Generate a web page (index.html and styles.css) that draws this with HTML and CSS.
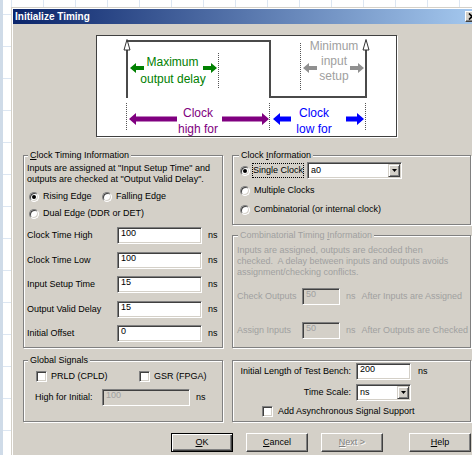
FILE: index.html
```html
<!DOCTYPE html>
<html lang="en">
<head>
<meta charset="utf-8">
<title>Initialize Timing</title>
<link rel="stylesheet" href="styles.css">
</head>
<body>
<div class="window">
  <div class="titlebar">
    <span class="title">Initialize Timing</span>
    <span class="close-btn"><svg width="8" height="7" viewBox="0 0 8 7"><path d="M1 0.5l6 6M7 0.5l-6 6" stroke="#000" stroke-width="1.6"/></svg></span>
  </div>
  <div class="dialog">
    <div class="diagram">
      <svg width="299" height="100" viewBox="0 0 299 100" font-family="Liberation Sans, Arial, sans-serif" font-size="12" text-anchor="middle">
        <!-- clock waveform -->
        <path d="M30 5H173V61H269V14M30 14V62" fill="none" stroke="#4a4a4a" stroke-width="2"/>
        <path d="M30 3.5L27 14H33Z M269 3.5L266 14H272Z" fill="#fff" stroke="#333" stroke-width="1"/>
        <!-- marker lines -->
        <path d="M121.5 17V53M203.5 7V54M29.5 67V95M172.5 67V95M268.5 67V95" stroke="#555" stroke-width="1" stroke-dasharray="1 1"/>
        <!-- output delay -->
        <g fill="#008000">
          <polygon points="47,30 39,30 39,27 33,32 39,37 39,34 47,34"/>
          <polygon points="106,30 114,30 114,27 120,32 114,37 114,34 106,34"/>
          <text x="75.5" y="30">Maximum</text>
          <text x="76" y="47">output delay</text>
        </g>
        <!-- input setup -->
        <g fill="#a0a0a0">
          <polygon points="220,30 212,30 212,27 206,32 212,37 212,34 220,34" fill="#909090"/>
          <polygon points="253,30 261,30 261,27 267,32 261,37 261,34 253,34" fill="#909090"/>
          <text x="237" y="14">Minimum</text>
          <text x="237" y="28.5">input</text>
          <text x="237" y="44">setup</text>
        </g>
        <!-- clock high -->
        <g fill="#800080">
          <polygon points="80,80.5 39,80.5 39,77 32,83 39,89 39,85.5 80,85.5"/>
          <polygon points="125,80.5 165,80.5 165,77 172,83 165,89 165,85.5 125,85.5"/>
          <text x="101" y="80.5">Clock</text>
          <text x="101" y="96.5">high for</text>
        </g>
        <!-- clock low -->
        <g fill="#0000ff">
          <polygon points="194,80.5 183,80.5 183,77 176,83 183,89 183,85.5 194,85.5"/>
          <polygon points="249,80.5 260,80.5 260,77 267,83 260,89 260,85.5 249,85.5"/>
          <text x="217" y="80.5">Clock</text>
          <text x="217" y="96.5">low for</text>
        </g>
      </svg>
    </div>

    <div class="main">
      <fieldset class="group timing">
        <legend><u>C</u>lock Timing Information</legend>
        <p class="note">Inputs are assigned at "Input Setup Time" and<br>outputs are checked at "Output Valid Delay".</p>
        <div class="edge-row">
          <span class="opt rising"><span class="radio on"></span>Rising Edge</span>
          <span class="opt"><span class="radio"></span>Falling Edge</span>
        </div>
        <div class="opt dual"><span class="radio"></span>Dual Edge (DDR or DET)</div>
        <div class="fields">
          <span>Clock Time High</span><span class="edit">100</span><span>ns</span>
          <span>Clock Time Low</span><span class="edit">100</span><span>ns</span>
          <span>Input Setup Time</span><span class="edit">15</span><span>ns</span>
          <span>Output Valid Delay</span><span class="edit">15</span><span>ns</span>
          <span>Initial Offset</span><span class="edit">0</span><span>ns</span>
        </div>
      </fieldset>

      <div class="right-col">
        <fieldset class="group clock-info">
          <legend>Clock <u>I</u>nformation</legend>
          <div class="opt single">
            <span class="radio on"></span><span class="focus">Single Clock</span>
            <span class="combo clock-sel"><span>a0</span><span class="drop"><svg width="5" height="3" viewBox="0 0 5 3"><path d="M0 0h5L2.5 3z"/></svg></span></span>
          </div>
          <div class="opt multi"><span class="radio"></span>Multiple Clocks</div>
          <div class="opt comb-opt"><span class="radio"></span>Combinatorial (or internal clock)</div>
        </fieldset>

        <fieldset class="group comb">
          <legend>Combinatorial Timing <u>I</u>nformation</legend>
          <p class="note">Inputs are assigned, outputs are decoded then<br>checked.&nbsp; A delay between inputs and outputs avoids<br>assignment/checking conflicts.</p>
          <div class="comb-fields">
            <span>Check Outputs</span><span class="edit off">50</span><span>ns</span><span>After Inputs are Assigned</span>
            <span>Assign Inputs</span><span class="edit off">50</span><span>ns</span><span>After Outputs are Checked</span>
          </div>
        </fieldset>
      </div>

      <fieldset class="group global">
        <legend>Global Signals</legend>
        <div class="checks">
          <span class="opt prld"><span class="check"></span>PRLD (CPLD)</span>
          <span class="opt"><span class="check"></span>GSR (FPGA)</span>
        </div>
        <div class="high-row">
          <span>High for Initial:</span><span class="edit off">100</span><span>ns</span>
        </div>
      </fieldset>

      <fieldset class="group bench">
        <div class="bench-grid">
          <span class="lbl">Initial Length of Test Bench:</span><span class="edit">200</span><span>ns</span>
          <span class="lbl">Time Scale:</span><span class="combo"><span>ns</span><span class="drop"><svg width="5" height="3" viewBox="0 0 5 3"><path d="M0 0h5L2.5 3z"/></svg></span></span><span></span>
          <span class="opt async"><span class="check"></span>Add Asynchronous Signal Support</span>
        </div>
      </fieldset>
    </div>

    <div class="buttons">
      <span class="btn default"><span><u>O</u>K</span></span>
      <span class="btn"><span><u>C</u>ancel</span></span>
      <span class="btn off"><span><u>N</u>ext &gt;</span></span>
      <span class="btn help"><span><u>H</u>elp</span></span>
    </div>
  </div>
</div>
</body>
</html>
```

FILE: styles.css
```css
* { box-sizing: border-box; }

html, body { margin: 0; padding: 0; }

/* desktop behind the dialog: pale grid with a narrow strip on the left */
body {
  width: 472px;
  height: 455px;
  overflow: hidden;
  position: relative;
  background-color: #fff;
  background-image:
    linear-gradient(90deg, #cfdbe8 0 3px, transparent 3px),
    linear-gradient(90deg, #dce6f2 1px, transparent 1px),
    linear-gradient(180deg, #dce6f2 1px, transparent 1px);
  background-size: 100% 100%, 32px 32px, 32px 32px;
  background-position: 0 0, 11px 14px, 11px 14px;
  background-repeat: no-repeat, repeat, repeat;
  font-family: "Liberation Sans", Arial, sans-serif;
}

/* dialog window */
.window {
  position: absolute;
  left: 11px;
  top: 7px;
  width: 472px;
  height: 460px;
  border: 1px solid #d4d0c8;
  padding: 1px;
  background: #d4d0c8;
  box-shadow: inset 1px 1px 0 #fff;
  font-size: 9px;
  line-height: 11px;
  color: #000;
}

.titlebar {
  height: 15px;
  display: flex;
  align-items: center;
  justify-content: space-between;
  padding: 0 2px;
  background: linear-gradient(90deg, #0a246a, #a6caf0);
}

.title {
  color: #fff;
  font-weight: bold;
  font-size: 10px;
  line-height: 13px;
}

.close-btn {
  width: 14px;
  height: 11px;
  display: flex;
  align-items: center;
  justify-content: center;
  background: #d4d0c8;
  border: 1px solid;
  border-color: #fff #404040 #404040 #fff;
  box-shadow: inset -1px -1px 0 #808080;
}

.dialog { padding: 11px 10px 0; }

/* timing diagram */
.diagram {
  width: 301px;
  height: 102px;
  margin-left: 73px;
  border: 1px solid #404040;
  background: #fff;
  box-shadow: 1px 1px 0 #fff;
}
.diagram svg { display: block; }

/* group boxes */
.main {
  display: grid;
  grid-template-columns: 200px 239px;
  column-gap: 9px;
  row-gap: 7px;
  margin-top: 13px;
}

.group {
  margin: 0;
  min-width: 0;
  border: 1px solid #808080;
  box-shadow: 1px 1px 0 #fff, inset 1px 1px 0 #fff;
}

.group legend {
  padding: 0 2px;
  line-height: 11px;
  background: #d4d0c8;
}

.note { margin: 0; white-space: nowrap; }

/* controls */
.opt {
  display: flex;
  align-items: center;
  height: 13px;
  white-space: nowrap;
}

.radio {
  flex: none;
  position: relative;
  width: 10px;
  height: 10px;
  margin-right: 4px;
  border-radius: 50%;
  background: #fff;
  border: 1px solid;
  border-color: #808080 #fff #fff #808080;
  box-shadow: inset 1px 1px 0 #404040, inset -1px -1px 0 #d4d0c8;
}
.radio.on::after {
  content: "";
  position: absolute;
  left: 2px;
  top: 2px;
  width: 4px;
  height: 4px;
  border-radius: 50%;
  background: #000;
}

.check {
  flex: none;
  width: 11px;
  height: 11px;
  margin-right: 4px;
  background: #fff;
  border: 1px solid;
  border-color: #808080 #fff #fff #808080;
  box-shadow: inset 1px 1px 0 #404040, inset -1px -1px 0 #d4d0c8;
}

.edit {
  height: 17px;
  padding: 0 3px;
  line-height: 11px;
  background: #fff;
  border: 1px solid;
  border-color: #808080 #fff #fff #808080;
  box-shadow: inset 1px 1px 0 #404040, inset -1px -1px 0 #d4d0c8;
  white-space: nowrap;
}
.edit.off { background: #d4d0c8; color: #a0a0a0; }

.combo {
  height: 17px;
  display: flex;
  align-items: center;
  justify-content: space-between;
  padding: 1px 1px 1px 3px;
  background: #fff;
  border: 1px solid;
  border-color: #808080 #fff #fff #808080;
  box-shadow: inset 1px 1px 0 #404040, inset -1px -1px 0 #d4d0c8;
}

.drop {
  width: 12px;
  height: 13px;
  display: flex;
  align-items: center;
  justify-content: center;
  background: #d4d0c8;
  border: 1px solid;
  border-color: #d4d0c8 #404040 #404040 #d4d0c8;
  box-shadow: inset 1px 1px 0 #fff, inset -1px -1px 0 #808080;
}
.drop svg { display: block; }

/* Clock Timing Information */
.timing { padding: 0 5px 5px 3px; }
.timing legend { margin-left: 1px; }
.timing .note { margin-top: 2px; }
.edge-row { display: flex; margin: 5px 0 0 2px; }
.edge-row .rising { width: 73px; }
.dual { margin: 4px 0 0 2px; }
.fields {
  display: grid;
  grid-template-columns: 84px 85px auto;
  column-gap: 6px;
  row-gap: 7.5px;
  align-items: center;
  margin-top: 7px;
}

/* right column */
.right-col {
  display: flex;
  flex-direction: column;
  gap: 5px;
}

.clock-info { padding: 1px 4px 8px 6px; }
.clock-info .opt { margin-left: 1px; }
.single { height: 17px; }
.single .radio { margin-right: 2px; }
.focus {
  height: 15px;
  padding: 0;
  line-height: 13px;
  border: 1px dotted #000;
}
.clock-sel { width: 95px; margin-left: 3px; }
.multi { margin-top: 5px; }
.comb-opt { margin-top: 6px; }

.comb {
  flex: 1;
  padding: 0 2px 0 4px;
  color: #a0a0a0;
}
.comb legend { margin-left: 1px; }
.comb .note { margin-top: 3.5px; }
.comb-fields {
  display: grid;
  grid-template-columns: 59px 38px auto auto;
  column-gap: 6px;
  row-gap: 17px;
  align-items: center;
  margin-top: 10.5px;
  white-space: nowrap;
}

/* Global Signals */
.global { padding: 0 4px; }
.checks { display: flex; margin: 4px 0 0 8px; }
.checks .prld { width: 103px; }
.high-row {
  display: grid;
  grid-template-columns: 61px 88px auto;
  column-gap: 6px;
  align-items: center;
  margin: 6px 0 0 7px;
}

/* test bench settings */
.bench {
  margin-top: 5px;
  padding: 2px 4px 3px;
}
.bench-grid {
  display: grid;
  grid-template-columns: 114px 55px auto;
  column-gap: 5px;
  row-gap: 4px;
  align-items: center;
}
.bench-grid .lbl { text-align: right; white-space: nowrap; }
.bench-grid > span:nth-child(3) { margin-left: 2px; }
.async { grid-column: 1 / -1; margin-left: 25px; }
.async .check { margin-right: 5px; }

/* dialog buttons */
.buttons {
  display: flex;
  justify-content: flex-end;
  gap: 13px;
  margin-top: 11px;
}

.btn {
  width: 62px;
  height: 19px;
  display: flex;
  align-items: center;
  justify-content: center;
  background: #d4d0c8;
  border: 1px solid;
  border-color: #fff #404040 #404040 #fff;
  box-shadow: inset -1px -1px 0 #808080;
}
.btn.default {
  border-color: #000;
  box-shadow: inset 1px 1px 0 #fff, inset -1px -1px 0 #404040, inset -2px -2px 0 #808080;
}
.btn.off { color: #808080; text-shadow: 1px 1px 0 #fff; }
.btn.help { margin-left: 13px; }
```
